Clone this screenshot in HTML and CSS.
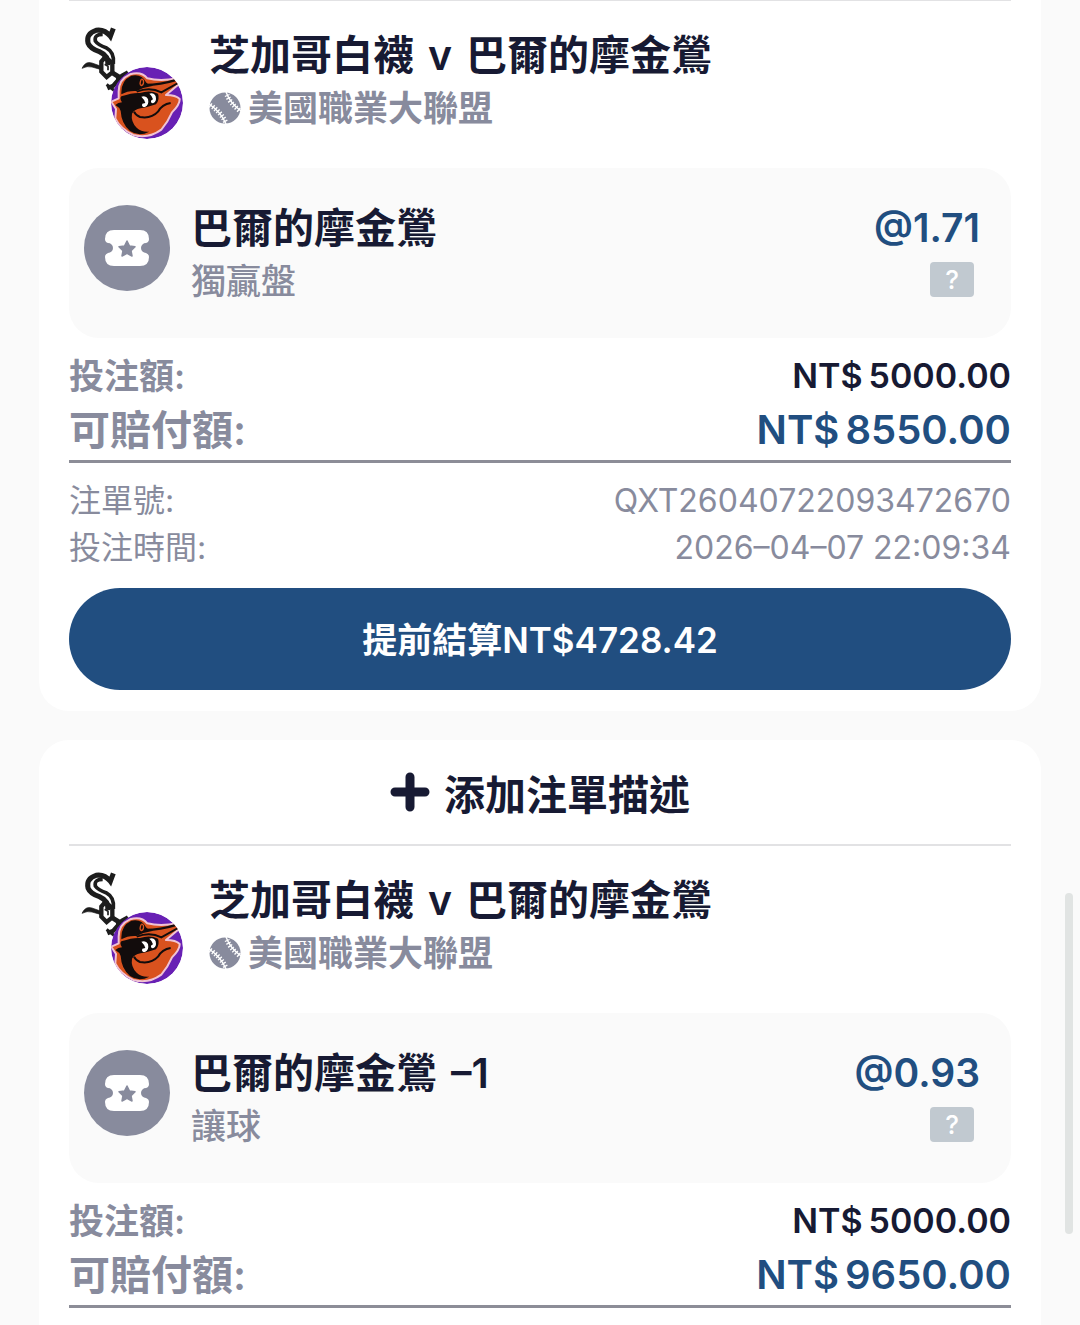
FILE: index.html
```html
<!DOCTYPE html>
<html lang="zh-Hant">
<head>
    <meta charset="UTF-8">
    <meta name="viewport" content="width=device-width, initial-scale=1.0">
    <title>注單</title>
    <link rel="stylesheet" href="styles.css">
</head>
<body>
    <!-- Shared icons -->
    <svg class="sprite" aria-hidden="true">
        <symbol id="teams" viewBox="-3 30 390 360">
            <!-- White Sox -->
            <g fill="none" stroke="#1d1d1d" stroke-linecap="butt" stroke-linejoin="miter">
                <path d="M130 40 L121 64 Q104 42 78 46 Q48 56 54 84 Q60 100 88 110 Q116 122 114 150" stroke-width="15"/>
                <path d="M98 58 Q72 58 76 78 Q84 90 108 98 Q134 112 130 146" stroke-width="11"/>
                <path d="M36 160 Q46 138 66 144 L94 154 V164 L66 156 Q52 152 36 160 Z" fill="#1d1d1d" stroke-width="2"/>
                <path d="M106 126 L94 140 V170 L110 186 L127 172 V144 Z" stroke-width="13"/>
                <path d="M104 148 L114 154 V166" stroke-width="5"/>
                <path d="M128 174 L144 184 L150 206 L166 216" stroke-width="15"/>
                <path d="M174 172 L156 182 L130 212 L112 220" stroke-width="13"/>
                <path d="M110 208 L132 226" stroke-width="9"/>
            </g>
            <!-- Orioles -->
            <clipPath id="badge"><circle cx="231" cy="264" r="108"/></clipPath>
            <g clip-path="url(#badge)">
                <circle cx="231" cy="264" r="108" fill="#6820b4"/>
                <path d="M146 234 Q144 194 180 178 Q214 168 232 190 Q270 200 322 190 Q330 196 328 206 L288 240 Q318 240 329 252 Q330 268 306 292 Q294 320 274 344 Q236 372 190 360 Q150 340 136 310 L138 282 L124 260 Q134 256 146 250 Z" fill="#d9521e" stroke="#f0c3d4" stroke-width="6" stroke-linejoin="round"/>
                <path d="M154 232 Q154 196 184 182 Q216 176 228 202 Q234 210 250 212 Q222 216 200 228 Q174 226 154 238 Z" fill="#120c0c"/>
                <path d="M136 270 Q144 262 156 262 Q148 250 154 244 Q190 232 210 234 Q240 224 264 236 Q270 252 258 268 Q236 276 212 280 Q192 284 186 296 Q182 320 200 338 Q214 352 238 350 Q206 366 180 348 Q154 326 152 288 Q148 276 136 270 Z" fill="#120c0c"/>
                <path d="M226 210 Q270 210 322 194" fill="none" stroke="#120c0c" stroke-width="7"/>
                <path d="M200 230 Q240 214 274 232 L324 204" fill="none" stroke="#120c0c" stroke-width="6"/>
                <path d="M302 264 Q276 268 264 290 Q244 312 210 306 Q196 300 192 290" fill="none" stroke="#120c0c" stroke-width="6"/>
                <path d="M213 194 Q207 210 214 212 Q223 208 220 196 Q216 190 213 194" fill="none" stroke="#d9521e" stroke-width="4"/>
                <path d="M214 245 Q228 240 234 252 Q238 270 225 276 Q213 276 217 266 L226 264 Q222 252 214 245 Z" fill="#fff"/>
                <path d="M238 236 Q252 232 257 244 Q261 260 249 265 Q240 264 244 256 L249 253 Q246 242 238 236 Z" fill="#fff"/>
            </g>
        </symbol>
        <symbol id="baseball" viewBox="0 0 32 32">
            <circle cx="16" cy="16" r="15.5" fill="#888b9d"/>
            <g fill="none" stroke="#fff">
                <path d="M17 0 Q21 11 32 19" stroke-width="1.4"/>
                <path d="M0 12 Q12 20 17 32" stroke-width="1.4"/>
                <path d="M18 3 Q21 11 31 19" stroke-width="5" stroke-dasharray="1.3 1.800"/>
                <path d="M1 13 Q12 20 17 31" stroke-width="5" stroke-dasharray="1.3 1.800"/>
            </g>
        </symbol>
        <symbol id="ticket" viewBox="0 0 86 86">
            <circle cx="43" cy="43" r="43" fill="#888b9d"/>
            <path d="M30 25 H56 Q65 25 65 34 Q65 37 62 38 A5 5 0 0 0 62 48 Q65 49 65 52 Q65 61 56 61 H30 Q21 61 21 52 Q21 49 24 48 A5 5 0 0 0 24 38 Q21 37 21 34 Q21 25 30 25 Z" fill="#fff"/>
            <path d="M43 36 L45.500 41 L51 41.800 L47 45.600 L48 51 L43 48.400 L38 51 L39 45.600 L35 41.800 L40.500 41 Z" fill="#888b9d" stroke="#888b9d" stroke-width="1.500" stroke-linejoin="round"/>
        </symbol>
        <symbol id="plus" viewBox="0 0 40 40">
            <path d="M20 5 V35 M5 20 H35" fill="none" stroke="#171a33" stroke-width="9" stroke-linecap="round"/>
        </symbol>
    </svg>

    <main class="bets">
        <article class="ticket ticket-cut">
            <header class="match">
                <svg class="teams" role="img" aria-label="芝加哥白襪 巴爾的摩金鶯"><use href="#teams"/></svg>
                <div class="match-text">
                    <h2><span>芝加哥白襪</span><span>v</span><span>巴爾的摩金鶯</span></h2>
                    <p class="league"><svg class="ball" aria-hidden="true"><use href="#baseball"/></svg>美國職業大聯盟</p>
                </div>
            </header>
            <section class="pick">
                <svg class="pick-icon" aria-hidden="true"><use href="#ticket"/></svg>
                <div class="pick-text">
                    <h3>巴爾的摩金鶯</h3>
                    <p>獨贏盤</p>
                </div>
                <div class="pick-odds">
                    <span class="odds">@1.71</span>
                    <button type="button" class="help">?</button>
                </div>
            </section>
            <dl class="amounts">
                <div class="row stake">
                    <dt>投注額:</dt>
                    <dd><span>NT$</span><span>5000.00</span></dd>
                </div>
                <div class="row payout">
                    <dt>可賠付額:</dt>
                    <dd><span>NT$</span><span>8550.00</span></dd>
                </div>
            </dl>
            <dl class="details">
                <div class="row">
                    <dt>注單號:</dt>
                    <dd>QXT26040722093472670</dd>
                </div>
                <div class="row">
                    <dt>投注時間:</dt>
                    <dd>2026–04–07 22:09:34</dd>
                </div>
            </dl>
            <button type="button" class="cashout">提前結算NT$4728.42</button>
        </article>

        <article class="ticket ticket-open">
            <button type="button" class="describe"><svg class="plus" aria-hidden="true"><use href="#plus"/></svg>添加注單描述</button>
            <header class="match">
                <svg class="teams" role="img" aria-label="芝加哥白襪 巴爾的摩金鶯"><use href="#teams"/></svg>
                <div class="match-text">
                    <h2><span>芝加哥白襪</span><span>v</span><span>巴爾的摩金鶯</span></h2>
                    <p class="league"><svg class="ball" aria-hidden="true"><use href="#baseball"/></svg>美國職業大聯盟</p>
                </div>
            </header>
            <section class="pick">
                <svg class="pick-icon" aria-hidden="true"><use href="#ticket"/></svg>
                <div class="pick-text">
                    <h3><span>巴爾的摩金鶯</span><span>–1</span></h3>
                    <p>讓球</p>
                </div>
                <div class="pick-odds">
                    <span class="odds">@0.93</span>
                    <button type="button" class="help">?</button>
                </div>
            </section>
            <dl class="amounts">
                <div class="row stake">
                    <dt>投注額:</dt>
                    <dd><span>NT$</span><span>5000.00</span></dd>
                </div>
                <div class="row payout">
                    <dt>可賠付額:</dt>
                    <dd><span>NT$</span><span>9650.00</span></dd>
                </div>
            </dl>
        </article>
    </main>
    <div class="scroll-thumb"></div>
</body>
</html>
```

FILE: styles.css
```css
* {
    box-sizing: border-box;
}

body {
    margin: 0;
    font-family: Inter, "Noto Sans CJK TC", sans-serif;
    color: #171a33;
    background-color: #fafafa;
    overflow: hidden; /* The app draws its own scroll thumb */
}

h2, h3, p, dl, dd {
    margin: 0;
}

button {
    border: 0;
    padding: 0;
    font-family: inherit;
    cursor: pointer;
}

.sprite {
    position: absolute;
    width: 0;
    height: 0;
}

.bets {
    display: flex;
    flex-direction: column;
    gap: 29px;
    padding: 0 39px;
}

.ticket {
    padding: 0 30px 21px;
    background-color: #fff;
    border-radius: 30px;
}

/* Scrolled past the top of the window */
.ticket-cut {
    border-radius: 0 0 30px 30px;
}

.ticket-cut .match {
    border-top-width: 1px;
}

/* Runs on below the window */
.ticket-open {
    border-radius: 30px 30px 0 0;
}

.describe {
    display: flex;
    align-items: center;
    justify-content: center;
    gap: 14px;
    width: 100%;
    height: 104px;
    background: none;
    color: #171a33;
    font-size: 41px;
    font-weight: 600;
}

.plus {
    width: 40px;
    height: 40px;
}

.match {
    display: flex;
    gap: 10px;
    padding: 24px 0 23px;
    border-top: 2px solid #e2e2e4;
}

.teams {
    width: 130px;
    height: 120px;
}

.match-text {
    padding-top: 2px;
}

.match h2,
.pick h3 {
    display: flex;
    gap: 14px;
    font-size: 41px;
    font-weight: 600;
    line-height: 56px;
}

.league {
    display: flex;
    align-items: center;
    gap: 7px;
    color: #888b9d;
    font-size: 35px;
    font-weight: 600;
    line-height: 50px;
}

.ball {
    width: 32px;
    height: 32px;
}

.pick {
    display: flex;
    gap: 21px;
    padding: 32px 31px 32px 15px;
    background-color: #fafafa;
    border-radius: 30px;
}

.pick-icon {
    width: 86px;
    height: 86px;
    margin-top: 5px;
}

.pick-text {
    flex: 1;
}

.pick p {
    color: #888b9d;
    font-size: 35px;
    font-weight: 500;
    line-height: 50px;
}

.pick-odds {
    display: flex;
    flex-direction: column;
    align-items: flex-end;
}

.odds {
    color: #214e80;
    font-size: 39px;
    font-weight: 600;
    line-height: 56px;
}

.help {
    width: 44px;
    height: 35px;
    margin: 6px 6px 0 0;
    background-color: #c1c9d0;
    border-radius: 4px;
    color: #fff;
    font-size: 26px;
    font-weight: 500;
}

.row {
    display: flex;
    justify-content: space-between;
}

.amounts {
    padding-top: 14px;
    border-bottom: 3px solid #8c8d97;
}

.amounts dt {
    color: #888b9d;
}

.amounts dd {
    display: flex;
    gap: 6px;
}

.stake,
.payout {
    font-weight: 600;
}

.stake {
    font-size: 35px;
    line-height: 48px;
}

.stake dd {
    font-size: 34px;
}

.payout {
    font-size: 41px;
    line-height: 60px;
}

.payout dd {
    color: #214e80;
    font-size: 40px;
}

.details {
    padding-top: 14px;
    color: #888b9d;
    font-size: 32px;
    line-height: 47px;
}

.cashout {
    display: block;
    width: 100%;
    height: 102px;
    margin-top: 17px;
    padding-bottom: 4px;
    background-color: #214e80;
    border-radius: 51px;
    color: #fff;
    font-size: 35px;
    font-weight: 600;
}

.scroll-thumb {
    position: fixed;
    top: 893px;
    right: 7px;
    width: 8px;
    height: 341px;
    background-color: #e1e4e3;
    border-radius: 4px;
}
```
